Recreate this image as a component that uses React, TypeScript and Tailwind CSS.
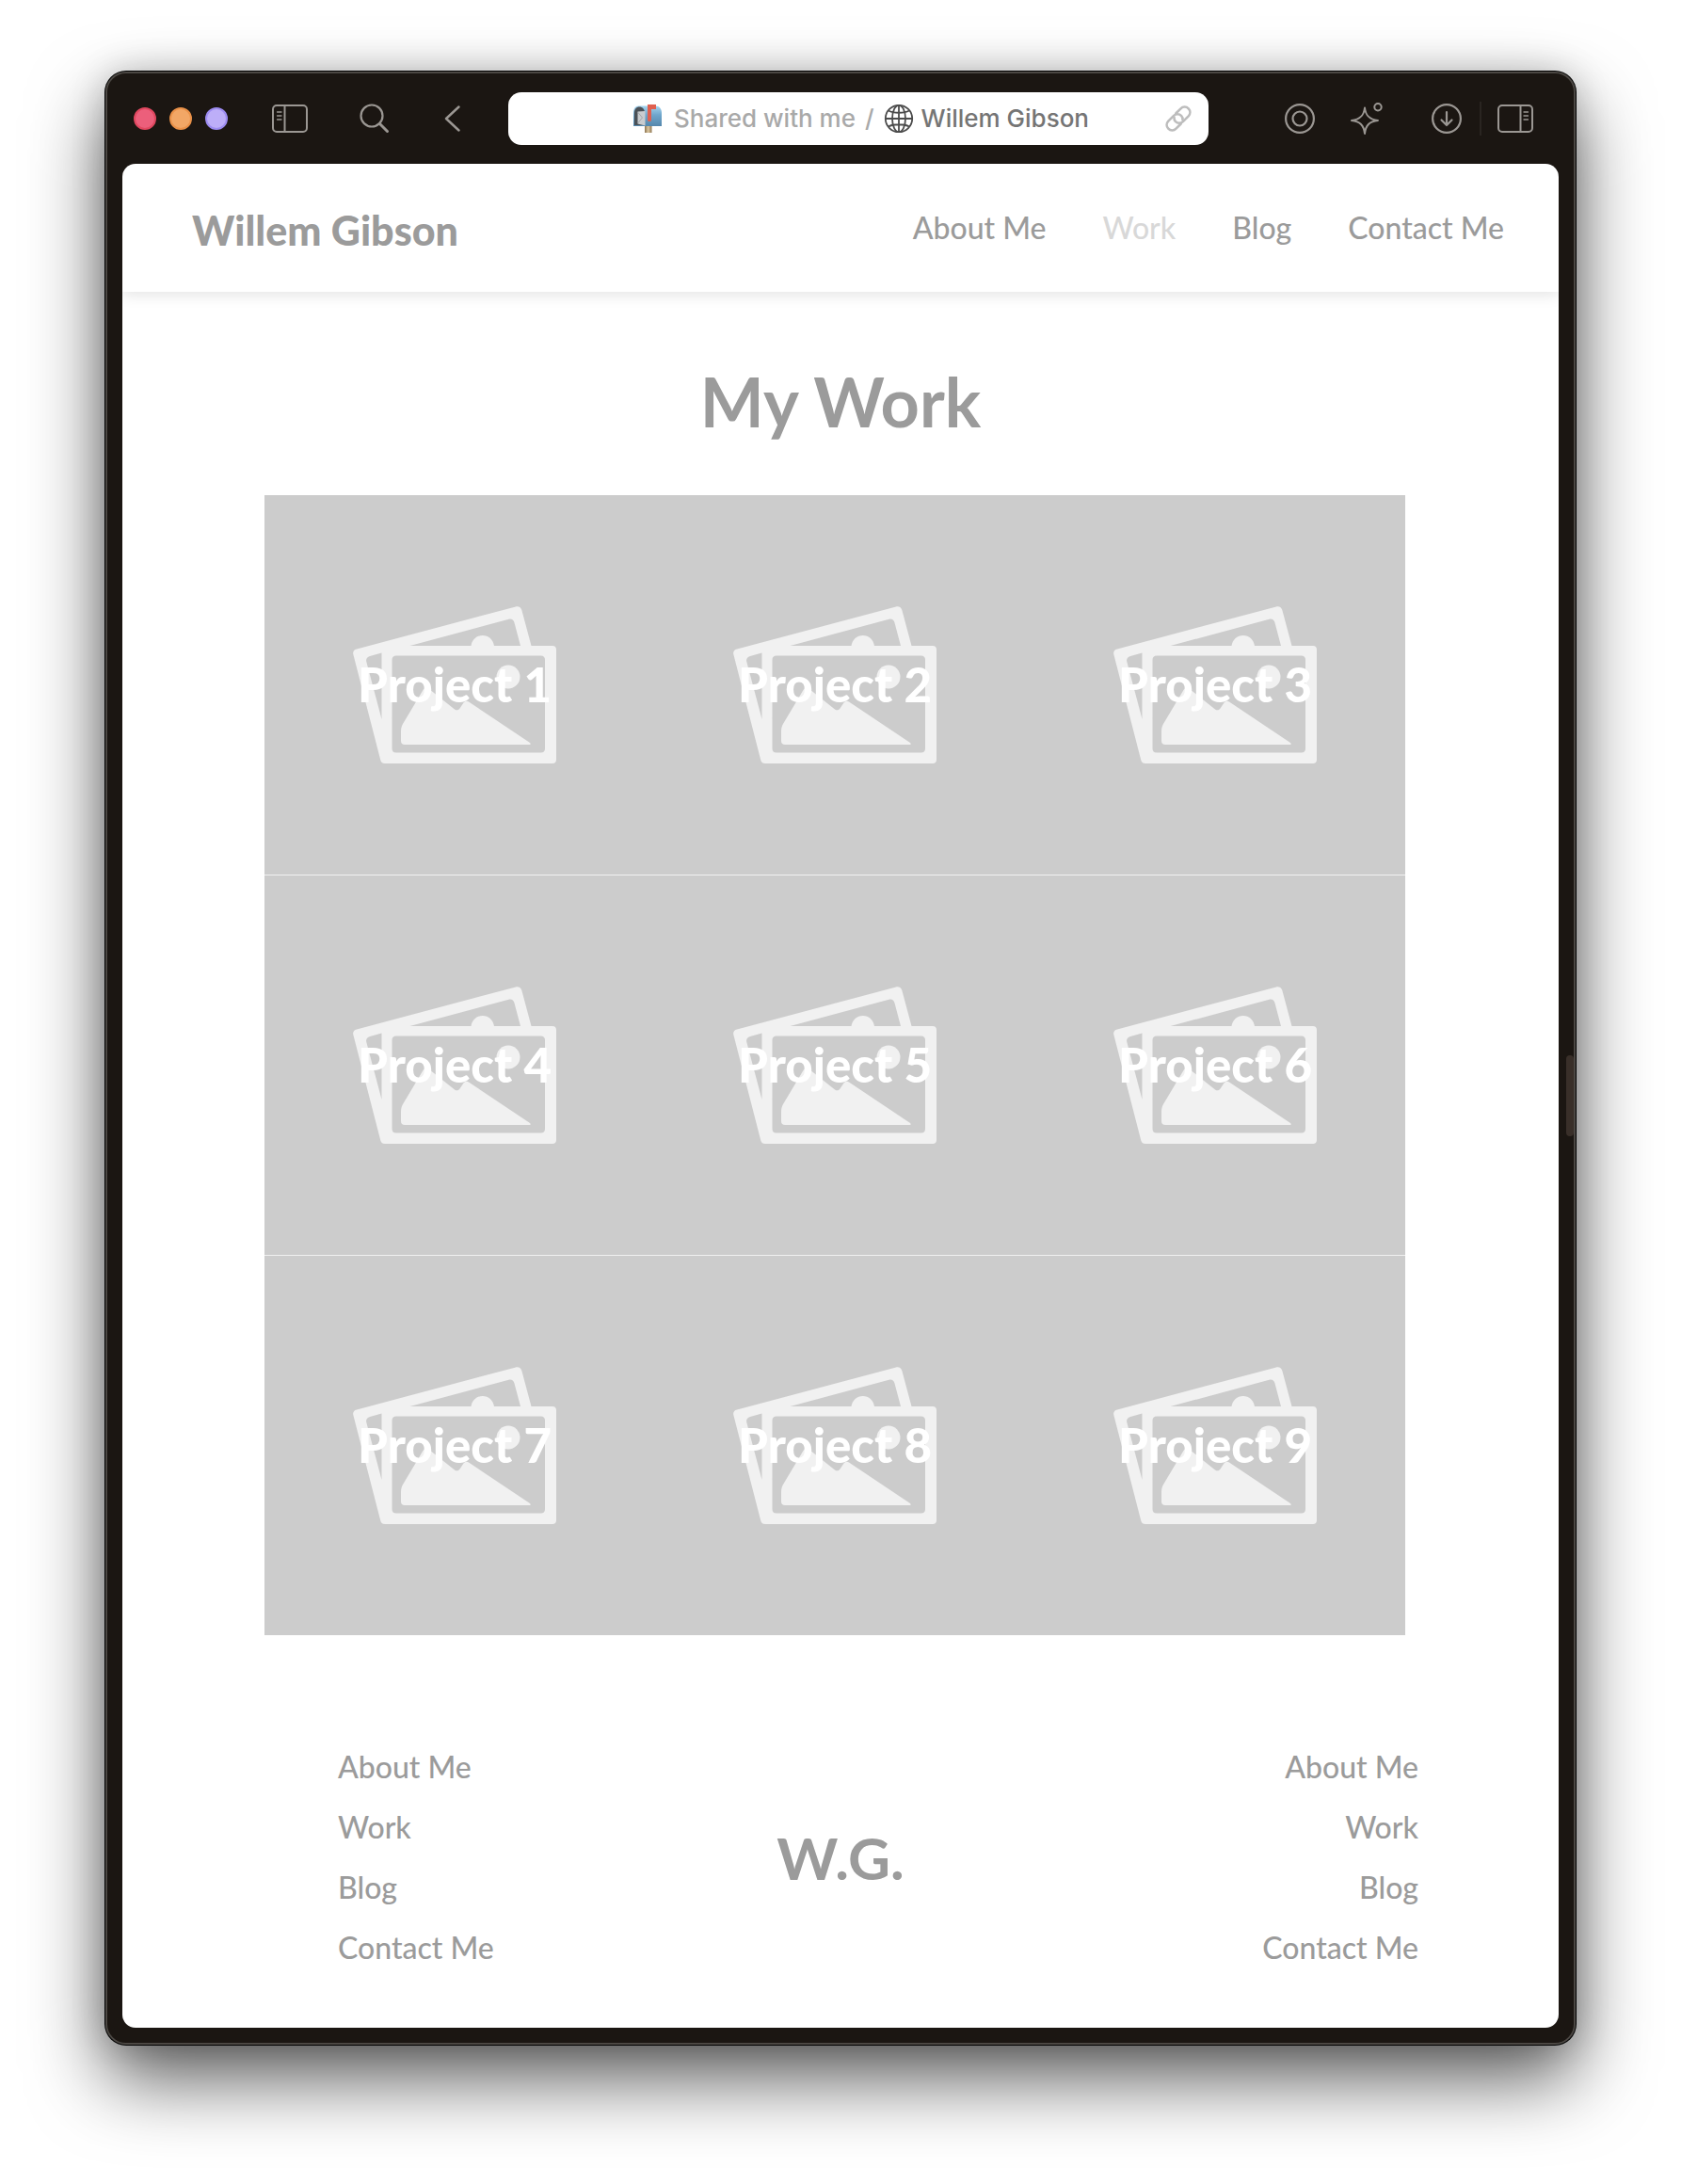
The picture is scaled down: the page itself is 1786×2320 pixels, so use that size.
import React from "react";

const LINKS = ["About Me", "Work", "Blog", "Contact Me"];

function SidebarIcon({ flip = false }: { flip?: boolean }) {
  return (
    <svg width="38" height="30" viewBox="0 0 38 30" fill="none" stroke="currentColor" strokeWidth="2" className={flip ? "-scale-x-100" : ""}>
      <rect x="1" y="1" width="36" height="28" rx="4" />
      <path d="M13.500 1v28" />
      <path d="M5.500 8h4.500M5.500 12h4.500M5.500 16h4.500" strokeWidth="1.300" strokeLinecap="round" />
    </svg>
  );
}

function Mailbox() {
  return (
    <svg width="32" height="32" viewBox="0 0 32 32">
      <defs>
        <linearGradient id="mailBody" x1="0" y1="0" x2="0" y2="1">
          <stop offset="0" stopColor="#a5d4ee" />
          <stop offset="0.450" stopColor="#6fa6cc" />
          <stop offset="1" stopColor="#5587ac" />
        </linearGradient>
        <linearGradient id="mailPost" x1="0" y1="0" x2="1" y2="0">
          <stop offset="0" stopColor="#8b7350" />
          <stop offset="0.500" stopColor="#dcc8a2" />
          <stop offset="1" stopColor="#8f7753" />
        </linearGradient>
      </defs>
      <rect x="13" y="23" width="7.500" height="8" fill="url(#mailPost)" />
      <path d="M6.500 2.500H24c5 0 7 3.500 7 8V24H1V10c0-4.500 2-7.500 5.500-7.500Z" fill="url(#mailBody)" />
      <path d="M2 23V10c0-4 2-6.500 5.300-6.500S13 6 13 10v13Z" fill="#4b5157" />
      <path d="M5.500 8.500 13.500 8v15.500l-8-2Z" fill="#c9cccf" />
      <path d="m5.500 9 5 6-5 6" fill="none" stroke="#9a9da1" strokeWidth="0.800" />
      <path d="M16 1h9v5h-5v11.500c0 2-4 2-4 0Z" fill="#e0604f" />
    </svg>
  );
}

function Globe() {
  return (
    <svg width="32" height="32" viewBox="0 0 32 32" fill="none" stroke="#4c4c4c" strokeWidth="1.800">
      <circle cx="16" cy="16" r="14.200" />
      <ellipse cx="16" cy="16" rx="7" ry="14.200" />
      <path d="M16 1.800v28.400M1.800 16h28.400M5 7.500c5 3 17 3 22 0M5 24.500c5-3 17-3 22 0" />
    </svg>
  );
}

function LinkIcon() {
  return (
    <svg width="30" height="30" viewBox="0 0 30 30" fill="none" stroke="#bdbdbd" strokeWidth="2.600" strokeLinecap="round" strokeLinejoin="round">
      <path d="M12.300 9.500 17.500 4.300a5.600 5.600 0 0 1 8.200 0c2.200 2.300 2.200 5.700 0 8l-5.800 5.800a5.500 5.500 0 0 1-7.900 0c-1.200-1.300-1.700-2.700-1.500-4.300" />
      <path d="M17.700 20.500 12.500 25.700a5.600 5.600 0 0 1-8.200 0c-2.200-2.300-2.200-5.700 0-8l5.800-5.800a5.500 5.500 0 0 1 7.900 0c1.200 1.300 1.700 2.700 1.500 4.300" />
    </svg>
  );
}

function Photos() {
  return (
    <svg width="216" height="167" viewBox="0 0 216 167" aria-hidden="true">
      <path
        fill="#f1f1f1"
        fillRule="evenodd"
        d="M4 45.500 173 .4c3-.8 5.500.6 6.300 3.600L189.500 42H212c2.500 0 4 1.500 4 4v117c0 2.500-1.500 4-4 4H34c-2.500 0-4-1-4.700-3.500L.3 51c-.6-2.700.8-4.800 3.700-5.500ZM60.500 42H125.500c1-6.500 6-11 12.300-11s11.200 4.500 12.200 11h28l-6.500-24.500c-.8-3-3-4.500-6-3.700ZM30.500 49.500 18 53c-3 .8-4.500 3-3.700 6L30.500 120ZM46 52.500c-3 0-4.500 1.500-4.500 4.500v94c0 3 1.500 4.500 4.500 4.500H199.500c3 0 4.500-1.500 4.500-4.500V57c0-3-1.500-4.500-4.500-4.500Z"
      />
      <circle cx="165" cy="75" r="12.500" fill="#f1f1f1" />
      <path
        fill="#f1f1f1"
        d="M51 143c0 2.500 1.500 4 4 4H187.500c1.500 0 1.500-1 .5-2L123 101.500c-2-1.500-4-1-5.500 1l-4 6c-1.500 2-3.500 2.500-5.500 1L81 88c-2.500-2-5-1.500-6.500 1L53 125c-1.500 3-2 5-2 8Z"
      />
    </svg>
  );
}

function IconButton({ label, className, children }: { label: string; className: string; children: React.ReactNode }) {
  return (
    <button type="button" aria-label={label} className={`flex shrink-0 items-center justify-center ${className}`}>
      {children}
    </button>
  );
}

function Toolbar() {
  return (
    <div className="flex h-24 items-center pr-[27px] pl-3 text-[#9b9793]">
      <div className="flex w-[398px] shrink-0 items-center">
        <div className="flex gap-3.5">
          <button type="button" aria-label="Close" className="size-6 rounded-full border-2 border-[#e0475f] bg-[#ec5f7b]" />
          <button type="button" aria-label="Minimize" className="size-6 rounded-full border-2 border-[#ea9148] bg-[#f2a766]" />
          <button type="button" aria-label="Zoom" className="size-6 rounded-full border-2 border-[#9c8bf0] bg-[#bdaef8]" />
        </div>
        <IconButton label="Sidebar" className="ml-[47px]">
          <SidebarIcon />
        </IconButton>
        <IconButton label="Search" className="ml-[55px]">
          <svg width="32" height="32" viewBox="0 0 32 32" fill="none" stroke="currentColor" strokeWidth="2.200" strokeLinecap="round">
            <circle cx="13" cy="13" r="11.500" />
            <path d="m21.500 21.500 8 8" strokeWidth="3" />
          </svg>
        </IconButton>
        <IconButton label="Back" className="ml-[58px]">
          <svg width="18" height="28" viewBox="0 0 18 28" fill="none" stroke="currentColor" strokeWidth="2.400" strokeLinecap="round" strokeLinejoin="round">
            <path d="M15.500 1.500 2 14l13.500 12.500" />
          </svg>
        </IconButton>
      </div>

      <div className="flex h-14 min-w-0 flex-1 items-center rounded-[14px] bg-white pr-[17px] pl-[52px] text-[26px] leading-8 font-medium font-['Inter',sans-serif]">
        <div className="flex flex-1 items-center justify-center whitespace-nowrap">
          <Mailbox />
          <span className="ml-3 text-[#a9a9a9]">Shared with me</span>
          <span className="ml-2.5 text-[#a9a9a9]">/</span>
          <span className="ml-2.5"><Globe /></span>
          <span className="ml-2 text-[#757575]">Willem Gibson</span>
        </div>
        <IconButton label="Copy link" className="">
          <LinkIcon />
        </IconButton>
      </div>

      <div className="flex w-[345px] shrink-0 items-center justify-end">
        <IconButton label="Focus" className="">
          <svg width="32" height="32" viewBox="0 0 32 32" fill="none" stroke="currentColor" strokeWidth="2.200">
            <circle cx="16" cy="16" r="14.900" />
            <circle cx="16" cy="16" r="7.500" />
          </svg>
        </IconButton>
        <IconButton label="Boost" className="ml-[38px]">
          <svg width="34" height="34" viewBox="0 0 34 34" fill="none" stroke="currentColor" strokeWidth="2" strokeLinejoin="round">
            <path d="M15 5.500c1 8.500 5 12.500 14 13.500-9 1-13 5-14 14-1-9-5-13-14-14 9-1 13-5 14-13.500Z" />
            <circle cx="29" cy="4.800" r="3.700" />
          </svg>
        </IconButton>
        <IconButton label="Downloads" className="ml-[52px]">
          <svg width="32" height="32" viewBox="0 0 32 32" fill="none" stroke="currentColor" strokeWidth="2.200" strokeLinecap="round" strokeLinejoin="round">
            <circle cx="16" cy="16" r="14.900" />
            <path d="M16 9v14M10.500 17.500 16 23l5.500-5.500" />
          </svg>
        </IconButton>
        <div className="mr-[17px] ml-[19px] h-9 w-0.5 bg-[#2a2521]" />
        <IconButton label="Split view" className="">
          <SidebarIcon flip />
        </IconButton>
      </div>
    </div>
  );
}

function FooterLinks({ label, className }: { label: string; className: string }) {
  return (
    <nav aria-label={label} className={`flex flex-col gap-6 text-[32px] leading-10 font-medium ${className}`}>
      {LINKS.map((l) => (
        <a key={l} href="#">{l}</a>
      ))}
    </nav>
  );
}

export default function App() {
  return (
    <div className="min-h-screen bg-white px-28 pt-[76px] pb-[147px] font-['Lato',sans-serif]">
      <div className="relative rounded-[22px] border-2 border-[#4b4743] bg-[#1b1612] px-4 pb-4 shadow-[0_0_0_1px_#000,0_36px_80px_rgba(0,0,0,0.65),0_0_36px_rgba(0,0,0,0.18)]">
        <Toolbar />
        <div className="absolute inset-y-0 right-0 flex items-center">
          <div className="h-[86px] w-2 rounded-full bg-[#392f29] translate-y-10" />
        </div>
        <div className="overflow-hidden rounded-[14px] bg-white text-[#9b9b9b]">
          <header className="flex h-[136px] items-center justify-between pr-[58px] pl-[74px] shadow-[0_4px_14px_rgba(0,0,0,0.10)]">
            <a href="#" className="mt-1.5 text-[43px] leading-12 font-black">Willem Gibson</a>
            <nav aria-label="Main" className="flex gap-[60px] text-[32px] leading-10 font-medium">
              {LINKS.map((l) => (
                <a key={l} href="#" className={l === "Work" ? "text-[#d8d8d8]" : ""}>{l}</a>
              ))}
            </nav>
          </header>

          <main>
            <h1 className="pt-[76px] text-center text-[72px] leading-20 font-bold">My Work</h1>
            <div className="mt-[60px] mr-[163px] ml-[151px] grid grid-cols-3">
              {[1, 2, 3, 4, 5, 6, 7, 8, 9].map((n) => (
                <a
                  key={n}
                  href="#"
                  className={`relative flex items-center justify-center bg-[#cccccc] ${n < 7 ? "h-[404px] border-b border-[#f1f1f1]" : "h-[403px]"}`}
                >
                  <Photos />
                  <span className="absolute inset-0 flex items-center justify-center text-[51px] font-black text-white">
                    Project {n}
                  </span>
                </a>
              ))}
            </div>
          </main>

          <footer className="grid grid-cols-[1fr_auto_1fr] items-center px-[149px] pt-[120px] pb-[65px]">
            <FooterLinks label="Footer left" className="items-start pl-20" />
            <div className="text-[62px] leading-20 font-bold">W.G.</div>
            <FooterLinks label="Footer right" className="items-end" />
          </footer>
        </div>
      </div>
    </div>
  );
}
